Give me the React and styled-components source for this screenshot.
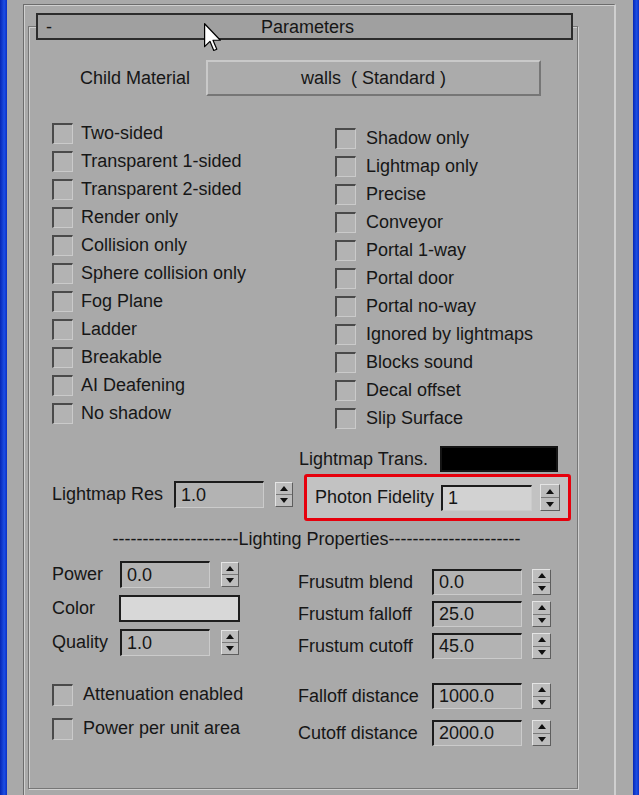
import styled, { createGlobalStyle } from "styled-components";

const GlobalStyle = createGlobalStyle`
  html, body {
    margin: 0;
    padding: 0;
    background: #a9a9a9;
  }
  body {
    font-family: "Liberation Sans", Arial, sans-serif;
    color: #161616;
  }
  * { box-sizing: border-box; }
`;

const Screen = styled.div`
  position: relative;
  display: flex;
  width: 639px;
  height: 795px;
  overflow: hidden;
  background: #a9a9a9;
  font-size: 18px;
`;

const BlueEdge = styled.div`
  flex: none;
  width: ${(p) => p.$w}px;
  background: linear-gradient(to right, #0626b4, #1d4fe4 60%, #0b30c6);
`;

const Sheet = styled.div`
  flex: 1;
  display: flex;
  padding: 4px 0 0 16px;
`;

const Panel = styled.div`
  width: 593px;
  height: 800px;
  border-top: 1px solid #6c6c6c;
  border-left: 1px solid #6c6c6c;
  border-right: 2px solid #cfcfcf;
  box-shadow: inset 1px 1px 0 #d0d0d0;
  padding: 21px 0 0 4px;
`;

const Group = styled.div`
  width: 550px;
  height: 763px;
  border: 1px solid #767676;
  box-shadow: inset 1px 1px 0 #d0d0d0, 1px 1px 0 #d0d0d0;
`;

const Header = styled.div`
  position: relative;
  margin: -14px 0 0 7px;
  width: 537px;
  height: 27px;
  border: 2px solid #2c2c2c;
  background: #a0a0a0;
  display: grid;
  grid-template-columns: 40px 1fr 40px;
  align-items: center;
  line-height: 22px;
`;

const Minus = styled.span`
  padding-left: 8px;
`;

const HeaderTitle = styled.span`
  text-align: center;
  padding-left: 6px;
`;

const ChildRow = styled.div`
  display: flex;
  align-items: center;
  margin-top: 20px;
  padding-left: 51px;
  height: 36px;
`;

const Label = styled.span`
  flex: none;
  width: ${(p) => p.$w}px;
  white-space: nowrap;
`;

const RaisedButton = styled.div`
  width: 335px;
  height: 36px;
  display: flex;
  align-items: center;
  justify-content: center;
  white-space: pre;
  background: #ababab;
  border-top: 2px solid #c9c9c9;
  border-left: 2px solid #c9c9c9;
  border-bottom: 2px solid #767676;
  border-right: 2px solid #767676;
`;

const Checks = styled.div`
  display: grid;
  grid-template-columns: 283px 1fr;
  margin-top: 27px;
  padding-left: 23px;
`;

const CheckColumn = styled.div`
  display: flex;
  flex-direction: column;
  gap: 7px;
  padding-top: ${(p) => p.$offset || 0}px;
`;

const CheckRow = styled.div`
  display: flex;
  align-items: center;
  gap: ${(p) => p.$gap || 8}px;
  height: 21px;
  line-height: 21px;
  white-space: nowrap;
  margin-top: ${(p) => p.$mt || 0}px;
`;

const Box = styled.span`
  flex: none;
  width: 21px;
  height: ${(p) => p.$h || 21}px;
  background: #b3b3b3;
  border-top: 2px solid #4a4a4a;
  border-left: 2px solid #4a4a4a;
  border-bottom: 1px solid #cacaca;
  border-right: 1px solid #cacaca;
`;

const TransRow = styled.div`
  display: flex;
  align-items: center;
  margin-top: 17px;
  padding-left: 270px;
  height: 26px;
`;

const Swatch = styled.div`
  width: ${(p) => p.$w}px;
  height: ${(p) => p.$h}px;
  background: ${(p) => p.$fill};
  border: 2px solid ${(p) => p.$edge};
`;

const MidRow = styled.div`
  display: flex;
  align-items: flex-start;
  margin-top: 2px;
  padding-left: 23px;
`;

const ResGroup = styled.div`
  display: flex;
  align-items: center;
  margin-top: 7px;
`;

const Highlight = styled.div`
  margin-left: 11px;
  width: 267px;
  height: 47px;
  display: flex;
  align-items: center;
  padding-left: 8px;
  background: #c2c2c2;
  border: 3px solid #e6000c;
  border-radius: 3px;
`;

const Field = styled.div`
  flex: none;
  width: ${(p) => p.$w || 90}px;
  height: ${(p) => p.$h || 27}px;
  padding-left: 5px;
  line-height: ${(p) => (p.$h || 27) - 3}px;
  background: ${(p) => (p.$light ? "#d2d2d2" : "#b3b3b3")};
  border-top: 2px solid #1c1c1c;
  border-left: 2px solid #1c1c1c;
  border-bottom: 1px solid #cbcbcb;
  border-right: 1px solid #cbcbcb;
`;

const Spinner = styled.div`
  flex: none;
  display: flex;
  flex-direction: column;
  width: ${(p) => p.$w || 18}px;
  height: ${(p) => p.$h || 25}px;
  margin-left: ${(p) => p.$gap || 11}px;
  background: #bdbdbd;
  border-top: 1px solid #e4e4e4;
  border-left: 1px solid #e4e4e4;
  border-bottom: 1px solid #5e5e5e;
  border-right: 1px solid #5e5e5e;
`;

const SpinHalf = styled.div`
  flex: 1;
  display: flex;
  align-items: center;
  justify-content: center;
  & + & {
    border-top: 1px solid #7a7a7a;
  }
`;

const Dashes = styled.div`
  margin-top: 7px;
  padding-left: 27px;
  height: 22px;
  line-height: 22px;
  text-align: center;
  white-space: nowrap;
`;

const Bottom = styled.div`
  display: flex;
  margin-top: 11px;
  padding-left: 23px;
`;

const Column = styled.div`
  display: flex;
  flex-direction: column;
  width: ${(p) => p.$w || "auto"};
  padding-top: ${(p) => p.$offset || 0}px;
  gap: ${(p) => p.$gap}px;
`;

const FieldRow = styled.div`
  display: flex;
  align-items: center;
  height: ${(p) => p.$h || 27}px;
  margin-top: ${(p) => p.$mt || 0}px;
`;

const Cursor = styled.svg`
  position: absolute;
  left: 203px;
  top: 23px;
`;

const Arrow = ({ down }) => (
  <svg width="8" height="5" viewBox="0 0 8 5">
    <path d={down ? "M0 0 H8 L4 5 Z" : "M4 0 L8 5 H0 Z"} fill="#101010" />
  </svg>
);

const Spin = (props) => (
  <Spinner {...props}>
    <SpinHalf>
      <Arrow />
    </SpinHalf>
    <SpinHalf>
      <Arrow down />
    </SpinHalf>
  </Spinner>
);

const leftChecks = [
  "Two-sided",
  "Transparent 1-sided",
  "Transparent 2-sided",
  "Render only",
  "Collision only",
  "Sphere collision only",
  "Fog Plane",
  "Ladder",
  "Breakable",
  "AI Deafening",
  "No shadow",
];

const rightChecks = [
  "Shadow only",
  "Lightmap only",
  "Precise",
  "Conveyor",
  "Portal 1-way",
  "Portal door",
  "Portal no-way",
  "Ignored by lightmaps",
  "Blocks sound",
  "Decal offset",
  "Slip Surface",
];

const frustum = [
  ["Frusutm blend", "0.0", 0],
  ["Frustum falloff", "25.0", 0],
  ["Frustum cutoff", "45.0", 0],
  ["Falloff distance", "1000.0", 18],
  ["Cutoff distance", "2000.0", 5],
];

export default function App() {
  return (
    <Screen>
      <GlobalStyle />
      <BlueEdge $w={7} />
      <Sheet>
        <Panel>
          <Group>
            <Header>
              <Minus>-</Minus>
              <HeaderTitle>Parameters</HeaderTitle>
              <span />
            </Header>

            <ChildRow>
              <Label $w={126}>Child Material</Label>
              <RaisedButton>walls  ( Standard )</RaisedButton>
            </ChildRow>

            <Checks>
              <CheckColumn>
                {leftChecks.map((c) => (
                  <CheckRow key={c}>
                    <Box />
                    {c}
                  </CheckRow>
                ))}
              </CheckColumn>
              <CheckColumn $offset={5}>
                {rightChecks.map((c) => (
                  <CheckRow key={c} $gap={10}>
                    <Box />
                    {c}
                  </CheckRow>
                ))}
              </CheckColumn>
            </Checks>

            <TransRow>
              <Label $w={141}>Lightmap Trans.</Label>
              <Swatch $w={118} $h={26} $fill="#000" $edge="#151515" />
            </TransRow>

            <MidRow>
              <ResGroup>
                <Label $w={122}>Lightmap Res</Label>
                <Field>1.0</Field>
                <Spin />
              </ResGroup>
              <Highlight>
                <Label $w={126}>Photon Fidelity</Label>
                <Field $w={91} $h={26} $light>1</Field>
                <Spin $gap={8} $w={20} $h={27} />
              </Highlight>
            </MidRow>

            <Dashes>---------------------Lighting Properties----------------------</Dashes>

            <Bottom>
              <Column $w="246px" $gap={7}>
                <FieldRow>
                  <Label $w={68}>Power</Label>
                  <Field>0.0</Field>
                  <Spin />
                </FieldRow>
                <FieldRow>
                  <Label $w={67}>Color</Label>
                  <Swatch $w={121} $h={27} $fill="#d8d8d8" $edge="#1e1e1e" />
                </FieldRow>
                <FieldRow>
                  <Label $w={68}>Quality</Label>
                  <Field>1.0</Field>
                  <Spin />
                </FieldRow>
                <CheckRow $mt={21} $gap={10}>
                  <Box $h={22} />
                  Attenuation enabled
                </CheckRow>
                <CheckRow $mt={6} $gap={10}>
                  <Box $h={22} />
                  Power per unit area
                </CheckRow>
              </Column>
              <Column $offset={8} $gap={6}>
                {frustum.map(([l, v, mt]) => (
                  <FieldRow key={l} $h={26} $mt={mt}>
                    <Label $w={134}>{l}</Label>
                    <Field $h={26}>{v}</Field>
                    <Spin $gap={10} $w={19} $h={26} />
                  </FieldRow>
                ))}
              </Column>
            </Bottom>
          </Group>
        </Panel>
      </Sheet>
      <BlueEdge $w={6} />

      <Cursor width="20" height="29" viewBox="0 0 12 19">
        <path
          d="M0.5 0.5 L0.5 15.5 L4 12 L6.5 18 L8.5 17.2 L6 11.3 L10.8 11.3 Z"
          fill="#fff"
          stroke="#000"
          strokeWidth="0.8"
          strokeLinejoin="round"
        />
      </Cursor>
    </Screen>
  );
}
